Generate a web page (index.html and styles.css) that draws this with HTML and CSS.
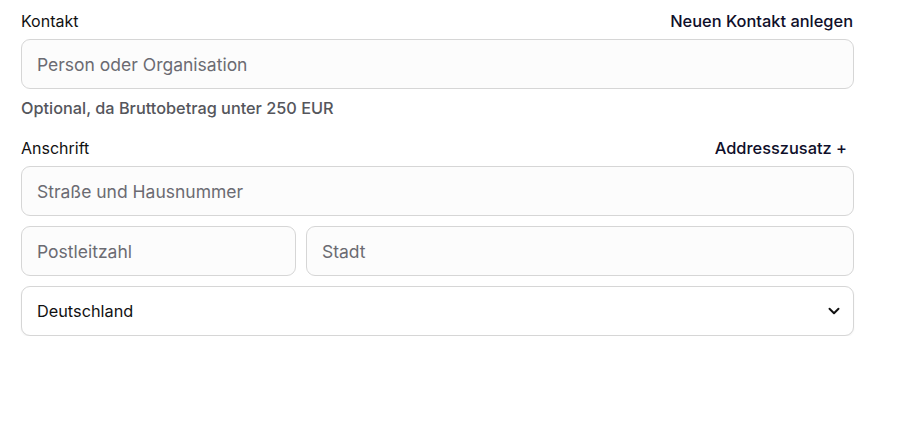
FILE: index.html
```html
<!DOCTYPE html>
<html lang="de">
<head>
  <meta charset="UTF-8">
  <title>Kontakt</title>
  <link rel="stylesheet" href="styles.css">
</head>
<body>
  <form class="form">
    <!-- Kontakt -->
    <div class="field-head">
      <label for="contact">Kontakt</label>
      <a href="#" class="head-link">Neuen Kontakt anlegen</a>
    </div>
    <input id="contact" class="input" type="text" placeholder="Person oder Organisation">
    <p class="hint">Optional, da Bruttobetrag unter 250 EUR</p>

    <!-- Anschrift -->
    <div class="field-head address-head">
      <label for="street">Anschrift</label>
      <a href="#" class="head-link">Addresszusatz +</a>
    </div>
    <div class="stack">
      <input id="street" class="input" type="text" placeholder="Straße und Hausnummer">
      <div class="row">
        <input class="input zip" type="text" placeholder="Postleitzahl">
        <input class="input" type="text" placeholder="Stadt">
      </div>
      <div class="select-wrap">
        <select class="select">
          <option>Deutschland</option>
        </select>
        <svg class="chevron" width="18" height="18" viewBox="0 0 24 24" fill="none" stroke="#111" stroke-width="2.6" stroke-linecap="round" stroke-linejoin="round"><path d="M6 9l6 6 6-6"/></svg>
      </div>
    </div>
  </form>
</body>
</html>
```

FILE: styles.css
```css
body {
  margin: 0;
  font-family: 'Inter', 'Liberation Sans', sans-serif;
  background: #fff;
  color: #111;
}

.form {
  width: 833px;
  padding: 10px 0 0 21px;
}

/* Label rows */
.field-head {
  display: flex;
  justify-content: space-between;
  align-items: center;
  height: 22px;
  margin-bottom: 7px;
  padding-right: 1px;
  font-size: 16px;
}

.field-head label {
  color: #111;
}

.head-link {
  color: #0f0f2a;
  font-size: 16.4px;
  font-weight: 500;
  text-decoration: none;
}

.address-head {
  margin-top: 19px;
  padding-right: 7px;
}

/* Inputs */
.input {
  box-sizing: border-box;
  display: block;
  width: 100%;
  height: 50px;
  padding: 0 15px;
  font-family: inherit;
  font-size: 17.5px;
  color: #111;
  background: #fcfcfc;
  border: 1px solid #d6d6d6;
  border-radius: 9px;
  outline: none;
}

.input::placeholder {
  color: #6b6b72;
}

.hint {
  margin: 9px 0 0;
  font-size: 16.3px;
  font-weight: 500;
  color: #55565c;
}

.stack {
  display: flex;
  flex-direction: column;
  gap: 10px;
}

.row {
  display: flex;
  gap: 10px;
}

.row .zip {
  width: 275px;
  flex: none;
}

/* Country select */
.select-wrap {
  position: relative;
}

.select {
  box-sizing: border-box;
  width: 100%;
  height: 50px;
  padding: 0 15px;
  font-family: inherit;
  font-size: 16.3px;
  color: #111;
  background: #fff;
  border: 1px solid #d6d6d6;
  border-radius: 9px;
  box-shadow: 0 1px 2px rgba(0, 0, 0, 0.06);
  appearance: none;
  outline: none;
}

.chevron {
  position: absolute;
  right: 11px;
  top: 16px;
  pointer-events: none;
}
```
